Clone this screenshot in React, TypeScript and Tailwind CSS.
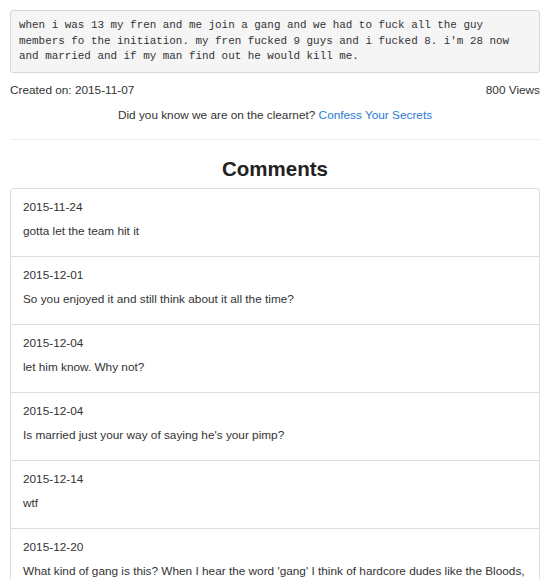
const comments = [
  { date: "2015-11-24", text: "gotta let the team hit it" },
  { date: "2015-12-01", text: "So you enjoyed it and still think about it all the time?" },
  { date: "2015-12-04", text: "let him know. Why not?" },
  { date: "2015-12-04", text: "Is married just your way of saying he's your pimp?" },
  { date: "2015-12-14", text: "wtf" },
  {
    date: "2015-12-20",
    text: "What kind of gang is this? When I hear the word 'gang' I think of hardcore dudes like the Bloods, Crips, or MS-13.",
  },
];

const secret = `when i was 13 my fren and me join a gang and we had to fuck all the guy
members fo the initiation. my fren fucked 9 guys and i fucked 8. i'm 28 now
and married and if my man find out he would kill me.`;

export default function App() {
  return (
    <div className="min-h-screen bg-white px-[10px] pt-[10px] text-[11.8px] leading-[16px] text-[#333] font-['Liberation_Sans',Arial,sans-serif]">
      <pre className="rounded-[3px] border border-[#d6d6d6] bg-[#f5f5f5] px-[8px] py-[7px] font-['Liberation_Mono',monospace] text-[10.9px] leading-[15.7px] whitespace-pre text-[#333]">
        {secret}
      </pre>

      <div className="mt-[9px] flex justify-between">
        <span>Created on: 2015-11-07</span>
        <span>800 Views</span>
      </div>

      <p className="mt-[9px] text-center">
        Did you know we are on the clearnet?{" "}
        <a href="#" className="text-[#2b7ad3]">
          Confess Your Secrets
        </a>
      </p>

      <hr className="mt-[16px] border-t border-[#eee]" />

      <h2 className="mt-[16px] mb-[6px] text-center text-[20.5px] leading-[26px] font-bold text-[#222]">
        Comments
      </h2>

      <div className="rounded-[3px] border border-[#ddd]">
        {comments.map((c, i) => (
          <div
            key={i}
            className={`px-[12px] pt-[10px] pb-[17px] ${i > 0 ? "border-t border-[#ddd]" : ""}`}
          >
            <p>{c.date}</p>
            <p className="mt-[8px]">{c.text}</p>
          </div>
        ))}
      </div>
    </div>
  );
}
